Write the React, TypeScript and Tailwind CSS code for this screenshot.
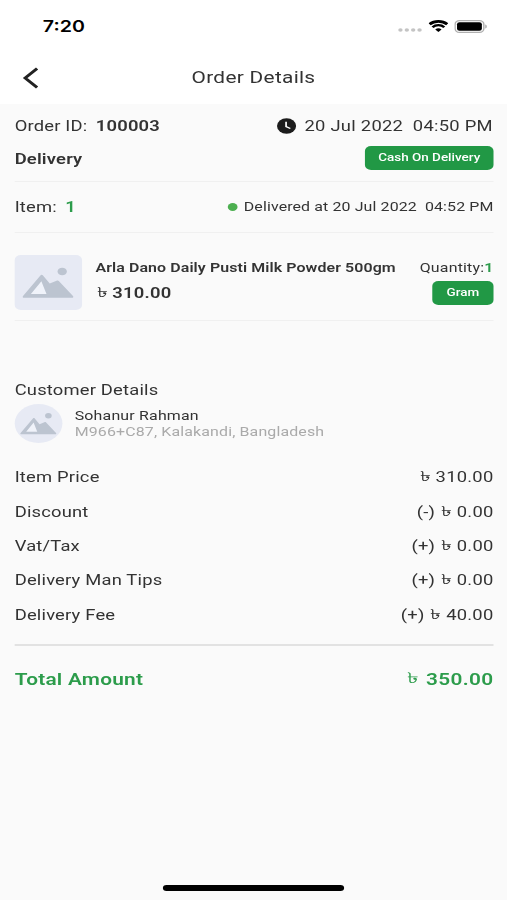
import React from 'react';

const priceRows = [
  { label: 'Item Price', sign: '', amount: '310.00' },
  { label: 'Discount', sign: '(-) ', amount: '0.00' },
  { label: 'Vat/Tax', sign: '(+) ', amount: '0.00' },
  { label: 'Delivery Man Tips', sign: '(+) ', amount: '0.00' },
  { label: 'Delivery Fee', sign: '(+) ', amount: '40.00' },
];

const ImagePlaceholder: React.FC<{ className: string }> = ({ className }) => (
  <div className={`shrink-0 overflow-hidden bg-[#e7eaf4] ${className}`}>
    <svg viewBox="0 0 55 55" className="h-full w-full">
      <circle cx="38.8" cy="16.5" r="3.8" fill="#bcc4d0" />
      <path d="M13 39.2h13L21.7 26z" fill="#f0f3fa" />
      <path
        fillRule="evenodd"
        d="M7.6 42.8c-1 0-1.4-1-.8-1.9L21 20.5c.6-.9 1.5-.9 2.1 0l5.5 7.9 5.6-2.6c.7-.5 1.4-.4 2 .4L47.6 40.9c.6.9.2 1.9-.8 1.9zM13.2 39h12.8L21.8 26.2z"
        fill="#bcc4d0"
      />
    </svg>
  </div>
);

const Taka = () => <span className="mr-px ml-[1.5px] inline-block origin-right -translate-y-px scale-x-115 scale-y-90 font-normal">৳</span>;

const Divider = () => <div className="h-px bg-[#f0f0f0]" />;

const StatusBar = () => (
  <div className="flex h-[52px] items-center justify-between pl-[35px] pr-[16px] text-black">
    <span className="font-['Inter'] text-[16px] font-semibold">7:20</span>
    <div className="flex items-center">
      <svg width="20" height="4" viewBox="0 0 20 4" className="mt-2 mr-[5px]" fill="#c4c4c4">
        <circle cx="2" cy="2" r="1.8" />
        <circle cx="7.2" cy="2" r="1.8" />
        <circle cx="12.4" cy="2" r="1.8" />
        <circle cx="17.6" cy="2" r="1.8" />
      </svg>
      <svg width="16" height="12" viewBox="0 0 16 12" className="mr-[5px]">
        <path d="M.8 4.3a10.3 10.3 0 0 1 14.4 0" fill="none" stroke="#000" strokeWidth="2.6" />
        <path d="M3.2 7.3a6.5 6.5 0 0 1 9.6 0" fill="none" stroke="#000" strokeWidth="2.2" />
        <path d="M8 12 5.4 9.5a3.6 3.6 0 0 1 5.2 0z" />
      </svg>
      <svg width="27" height="13" viewBox="0 0 27 13">
        <rect x=".6" y=".6" width="23.5" height="11.8" rx="3.6" fill="#fff" stroke="#b0b0b0" strokeWidth="1.2" />
        <rect x="2.2" y="2.2" width="20.3" height="8.6" rx="2" />
        <path d="M25.2 4.5c1.8.6 1.8 3.4 0 4z" fill="#b0b0b0" />
      </svg>
    </div>
  </div>
);

export default function App() {
  return (
    <div className="h-[900px] w-[507px] overflow-hidden bg-[#fafafa]">
      <div className="flex h-[900px] w-[414px] origin-top-left scale-x-[1.2246] flex-col font-['Roboto',sans-serif] text-[#333]">
        <header className="h-[104px] bg-white">
          <StatusBar />
          <div className="flex h-[51px] items-center">
            <svg width="14" height="22" viewBox="0 0 14 22" className="ml-[18px]">
              <path d="M12.3 1.5 2.5 11l9.8 9.5" fill="none" stroke="#222" strokeWidth="2.6" />
            </svg>
            <h1 className="mr-[32px] flex-1 text-center text-[17px] tracking-[0.25px]">Order Details</h1>
          </div>
        </header>

        <main className="flex-1 pl-3 pr-[11px] tracking-[0.15px]">
          <div className="flex h-[44px] items-center justify-between text-[15px]">
            <p>Order ID: <span className="ml-[3px] font-semibold">100003</span></p>
            <div className="flex items-center gap-[7px]">
              <svg width="16" height="16" viewBox="0 0 16 16" className="-mt-px">
                <circle cx="8" cy="8" r="7.8" fill="#1c1c1c" />
                <path d="M7.6 3.8v4.7l3.5 2" fill="none" stroke="#fff" strokeWidth="1.4" />
              </svg>
              <span className="mr-[0.5px] whitespace-pre tracking-[0.22px]">20 Jul 2022  04:50 PM</span>
            </div>
          </div>
          <div className="flex h-[33px] items-start justify-between">
            <span className="text-[15px] leading-[23px] font-semibold">Delivery</span>
            <span className="-mt-[2px] flex h-6 w-[105px] items-center justify-center rounded-[5px] bg-[#219845] text-[11px] font-medium tracking-normal text-white">Cash On Delivery</span>
          </div>
          <Divider />
          <div className="flex h-[50px] items-center justify-between">
            <p className="text-[15px]">Item: <span className="ml-[3px] font-semibold text-[#2c9c4b]">1</span></p>
            <div className="flex items-center gap-[5px]">
              <span className="size-2 rounded-full bg-[#4caf50]" />
              <span className="text-[13px] tracking-[0.1px] whitespace-pre">Delivered at 20 Jul 2022  04:52 PM</span>
            </div>
          </div>
          <Divider />
          <div className="flex h-[87px] pt-[22px]">
            <ImagePlaceholder className="size-[55px] rounded-[5px]" />
            <div className="ml-[11px] flex-1 pt-[3px]">
              <p className="text-[13px] font-semibold tracking-[0.08px]">Arla Dano Daily Pusti Milk Powder 500gm</p>
              <p className="mt-1 text-[15px] font-semibold tracking-[0.2px]"><Taka /> 310.00</p>
            </div>
            <div className="flex flex-col items-end pt-[3px]">
              <p className="text-[13px] tracking-[0.15px]">Quantity:<span className="font-semibold text-[#2c9c4b]">1</span></p>
              <span className="mt-[3px] flex h-6 w-[50px] items-center justify-center rounded-[5px] bg-[#219845] pt-px text-[11px] font-medium tracking-normal text-white">Gram</span>
            </div>
          </div>
          <Divider />

          <h2 className="mt-[58px] text-[15px]">Customer Details</h2>
          <div className="mt-[2px] flex items-center">
            <ImagePlaceholder className="size-[39px] rounded-full" />
            <div className="ml-[10px] pt-[2px]">
              <p className="text-[13px] leading-4">Sohanur Rahman</p>
              <p className="text-[13px] leading-4 tracking-[0.12px] text-[#aaa]">M966+C87, Kalakandi, Bangladesh</p>
            </div>
          </div>

          <div className="mt-[18px]">
            {priceRows.map(row => (
              <div key={row.label} className="flex h-[34.3px] items-center justify-between text-[15px]">
                <span>{row.label}</span>
                <span className="tracking-[0.2px]">{row.sign}<Taka /> {row.amount}</span>
              </div>
            ))}
          </div>
          <div className="mt-[12.5px] h-[2px] bg-[#e2e2e2]" />
          <div className="mt-[21px] flex items-center justify-between text-[17px] font-semibold tracking-[0.2px] text-[#2c9c4b]">
            <span>Total Amount</span>
            <span className="tracking-[0.3px]"><Taka /> 350.00</span>
          </div>
        </main>

        <div className="mb-[9px] h-[6px] w-[148px] self-center rounded-full bg-black" />
      </div>
    </div>
  );
}
